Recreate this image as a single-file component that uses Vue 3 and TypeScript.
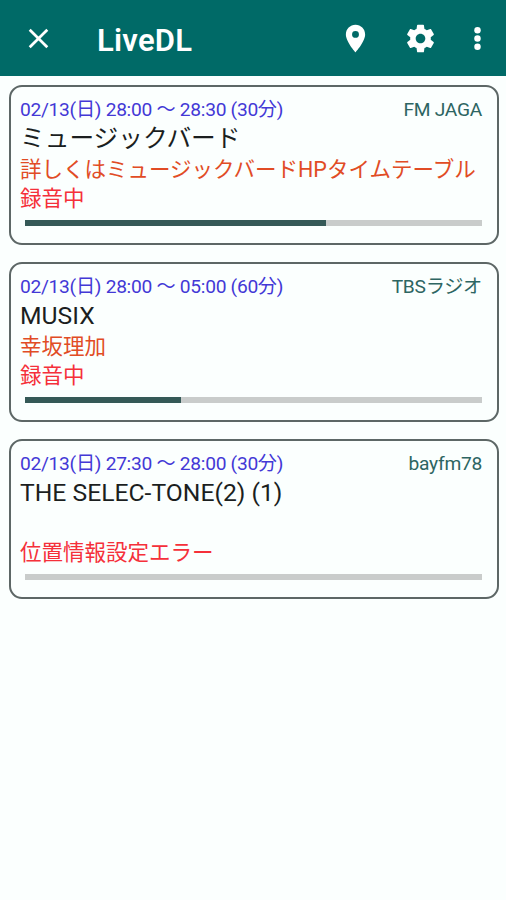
<script setup lang="ts">
interface Recording {
  time: string
  station: string
  title: string
  detail: string
  status: string
  progress: number
}

const recordings: Recording[] = [
  {
    time: '02/13(日) 28:00 ～ 28:30 (30分)',
    station: 'FM JAGA',
    title: 'ミュージックバード',
    detail: '詳しくはミュージックバードHPタイムテーブル',
    status: '録音中',
    progress: 65.9,
  },
  {
    time: '02/13(日) 28:00 ～ 05:00 (60分)',
    station: 'TBSラジオ',
    title: 'MUSIX',
    detail: '幸坂理加',
    status: '録音中',
    progress: 34.2,
  },
  {
    time: '02/13(日) 27:30 ～ 28:00 (30分)',
    station: 'bayfm78',
    title: 'THE SELEC-TONE(2) (1)',
    detail: '',
    status: '位置情報設定エラー',
    progress: 0,
  },
]
</script>

<template>
  <div class="screen">
    <header class="toolbar">
      <button class="icon close" aria-label="Close">
        <svg viewBox="0 0 24 24"><path d="M5.6 5.6 18.4 18.4M18.4 5.6 5.6 18.4" fill="none" stroke="currentColor" stroke-width="2" /></svg>
      </button>
      <h1>LiveDL</h1>
      <button class="icon pin" aria-label="Location">
        <svg viewBox="0 0 24 24"><path d="M12 2C8.13 2 5 5.13 5 9c0 5.25 7 13 7 13s7-7.75 7-13c0-3.87-3.13-7-7-7zm0 9.5a2.5 2.5 0 0 1 0-5 2.5 2.5 0 0 1 0 5z" /></svg>
      </button>
      <button class="icon gear" aria-label="Settings">
        <svg viewBox="0 0 24 24"><path d="M19.43 12.98c.04-.32.07-.64.07-.98s-.03-.66-.07-.98l2.11-1.65c.19-.15.24-.42.12-.64l-2-3.46c-.12-.22-.39-.3-.61-.22l-2.49 1c-.52-.4-1.08-.73-1.69-.98l-.38-2.65C14.46 2.18 14.25 2 14 2h-4c-.25 0-.46.18-.49.42l-.38 2.65c-.61.25-1.17.59-1.69.98l-2.49-1c-.23-.09-.49 0-.61.22l-2 3.46c-.13.22-.07.49.12.64l2.11 1.65c-.04.32-.07.65-.07.98s.03.66.07.98l-2.11 1.65c-.19.15-.24.42-.12.64l2 3.46c.12.22.39.3.61.22l2.49-1c.52.4 1.08.73 1.69.98l.38 2.65c.03.24.24.42.49.42h4c.25 0 .46-.18.49-.42l.38-2.65c.61-.25 1.17-.59 1.69-.98l2.49 1c.23.09.49 0 .61-.22l2-3.46c.12-.22.07-.49-.12-.64l-2.11-1.65zM12 15.5c-1.93 0-3.5-1.57-3.5-3.5s1.57-3.5 3.5-3.5 3.5 1.57 3.5 3.5-1.57 3.5-3.5 3.5z" /></svg>
      </button>
      <button class="icon more" aria-label="More options">
        <svg viewBox="0 0 24 24"><circle cx="12" cy="6" r="2.35" /><circle cx="12" cy="12" r="2.35" /><circle cx="12" cy="18" r="2.35" /></svg>
      </button>
    </header>
    <main class="list">
      <article v-for="item in recordings" :key="item.title" class="card">
        <div class="meta">
          <span class="time">{{ item.time }}</span>
          <span class="station">{{ item.station }}</span>
        </div>
        <h2>{{ item.title }}</h2>
        <p class="detail">{{ item.detail }}</p>
        <p class="status">{{ item.status }}</p>
        <div class="track"><div class="fill" :style="{ width: item.progress + '%' }"></div></div>
      </article>
    </main>
  </div>
</template>

<style>
body {
  margin: 0;
  background: #fbfffe;
}
</style>

<style scoped>
.screen {
  box-sizing: border-box;
  min-height: 900px;
  background: #fbfffe;
  font-family: Roboto, "Noto Sans CJK JP", sans-serif;
}
.toolbar {
  box-sizing: border-box;
  display: flex;
  align-items: center;
  height: 76px;
  padding: 1px 12.5px 0 21.5px;
  background: #006a67;
  color: #fff;
}
.icon {
  flex: none;
  width: 33px;
  height: 33px;
  padding: 0;
  border: 0;
  background: none;
  color: inherit;
}
.icon svg {
  display: block;
  width: 100%;
  height: 100%;
  fill: currentColor;
}
h1 {
  flex: 1;
  margin: 4px 0 0 42.5px;
  font-size: 31px;
  line-height: 40px;
  font-weight: 600;
  letter-spacing: 0.25px;
}
.gear {
  margin-left: 32px;
}
.more {
  margin-left: 24px;
}
.list {
  display: flex;
  flex-direction: column;
  gap: 17px;
  padding: 8.5px 7.5px 0 8.5px;
}
.card {
  box-sizing: border-box;
  height: 160px;
  padding: 9px 14.5px 0 9.5px;
  border: 2px solid #5d6766;
  border-radius: 13px;
  white-space: nowrap;
}
.meta {
  display: flex;
  justify-content: space-between;
  height: 27px;
  font-size: 19.2px;
  line-height: 27px;
}
.time {
  color: #4338d6;
  letter-spacing: -0.29px;
}
.station {
  color: #2d6562;
  letter-spacing: -0.28px;
}
h2 {
  height: 32px;
  margin: 0;
  color: #1b1f1f;
  font-size: 24.7px;
  line-height: 32px;
  font-weight: 400;
}
p {
  height: 29.5px;
  margin: 0;
  font-size: 21.5px;
  line-height: 30px;
}
.detail {
  color: #e14c25;
}
.status {
  color: #f5303a;
}
.track {
  height: 5.5px;
  margin: 6.5px 0 0 5px;
  background: #c9cccb;
}
.fill {
  height: 100%;
  background: #355957;
}
</style>
